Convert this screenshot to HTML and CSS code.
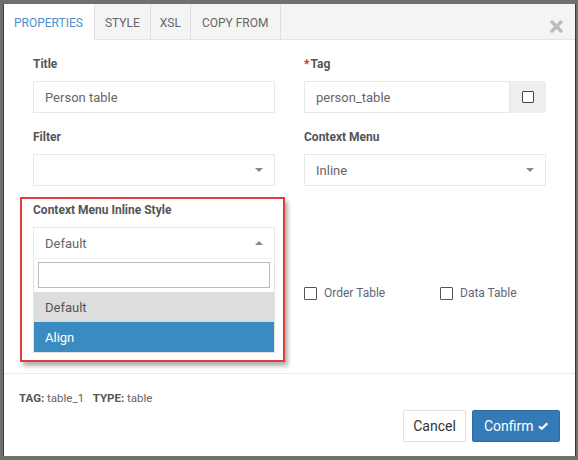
FILE: index.html
```html
<!DOCTYPE html>
<html>
<head>
<meta charset="utf-8">
<link rel="stylesheet" href="styles.css">
</head>
<body>
<div class="modal">
  <div class="modal-header">
    <div class="tabs">
      <div class="tab active">PROPERTIES</div>
      <div class="tab">STYLE</div>
      <div class="tab">XSL</div>
      <div class="tab">COPY FROM</div>
    </div>
    <button class="close" aria-label="Close">
      <svg width="13" height="13" viewBox="0 0 13 13"><path d="M2 2L11 11M11 2L2 11" stroke="#bcbcbc" stroke-width="3.4" stroke-linecap="round"/></svg>
    </button>
  </div>
  <div class="modal-body">
    <div class="row">
      <div class="group">
        <div class="label">Title</div>
        <div class="input">Person table</div>
      </div>
      <div class="group">
        <div class="label"><span class="req">*</span>Tag</div>
        <div class="input-group">
          <div class="input grow">person_table</div>
          <div class="addon"><span class="cb small"></span></div>
        </div>
      </div>
    </div>
    <div class="row">
      <div class="group">
        <div class="label">Filter</div>
        <div class="input select"><span></span><span class="caret down"></span></div>
      </div>
      <div class="group">
        <div class="label">Context Menu</div>
        <div class="input select"><span>Inline</span><span class="caret down"></span></div>
      </div>
    </div>
    <div class="row">
      <div class="group open">
        <div class="highlight"></div>
        <div class="label">Context Menu Inline Style</div>
        <div class="input select"><span>Default</span><span class="caret up"></span></div>
        <div class="dropdown">
          <div class="search"></div>
          <div class="option hover">Default</div>
          <div class="option selected">Align</div>
        </div>
      </div>
      <div class="group"></div>
    </div>
    <div class="row checks">
      <div></div>
      <div class="check-list">
        <label class="check first"><span class="cb"></span>Order Table</label>
        <label class="check"><span class="cb"></span>Data Table</label>
      </div>
    </div>
  </div>
  <div class="modal-footer">
    <div class="info"><b>TAG:</b> table_1&nbsp;&nbsp; <b>TYPE:</b> table</div>
    <div class="buttons">
      <button class="btn btn-default">Cancel</button>
      <button class="btn btn-primary">Confirm <svg width="15" height="12" viewBox="0 0 15 12"><path d="M1.5 6.5L5.5 10L13.5 2" fill="none" stroke="#fff" stroke-width="3.2" stroke-linejoin="round"/></svg></button>
    </div>
  </div>
</div>
</body>
</html>
```

FILE: styles.css
```css
* { box-sizing: border-box; }
html, body { margin: 0; padding: 0; }
body {
  width: 578px;
  height: 460px;
  background: #6f6f6f;
  font-family: Roboto, "Liberation Sans", sans-serif;
  padding: 4px 2px 0 3px;
  overflow: hidden;
}
.modal {
  width: 573px;
  height: 452px;
  background: #fff;
  border-left: 1px solid #3a3a3a;
  border-right: 1px solid #3a3a3a;
  display: flex;
  flex-direction: column;
}
.modal-header {
  height: 36px;
  background: #f4f4f4;
  border-bottom: 1px solid #e4e4e4;
  display: flex;
  justify-content: space-between;
  align-items: stretch;
}
.tabs { display: flex; }
.tab {
  display: flex;
  align-items: center;
  padding: 2px 10px 0;
  font-size: 12px;
  color: #666;
  border-right: 1px solid #dedede;
}
.tab.active {
  background: #fff;
  color: #4f8fcb;
  height: 36px;
  padding: 2px 11px 0 10px;
}
.tab:nth-child(3) { padding: 2px 9px 0; }
.tab:nth-child(4) { padding: 2px 11px 0; }
.close {
  border: 0;
  background: transparent;
  padding: 0;
  margin: 16px 12px 0 0;
  width: 13px;
  height: 13px;
}
.modal-body {
  height: 334px;
  border-bottom: 1px solid #ececec;
  padding: 17px 29px 0;
}
.row {
  display: grid;
  grid-template-columns: 242px 242px;
  column-gap: 29px;
}
.group {
  margin-bottom: 17px;
  position: relative;
}
.label {
  font-size: 12px;
  font-weight: bold;
  color: #555;
  line-height: 14px;
  height: 14px;
  margin-bottom: 10px;
}
.req { color: #cc2a2a; margin-right: 1px; }
.input {
  height: 32px;
  border: 1px solid #e9e9e9;
  font-size: 13px;
  color: #666;
  padding: 0 11px;
  display: flex;
  align-items: center;
  background: #fff;
}
.input-group { display: flex; }
.grow { flex: 1; }
.addon {
  width: 36px;
  height: 32px;
  background: #eeeeee;
  border-radius: 0 3px 3px 0;
  display: flex;
  align-items: center;
  justify-content: center;
}
.select { justify-content: space-between; }
.caret {
  width: 0; height: 0;
  border-left: 4px solid transparent;
  border-right: 4px solid transparent;
}
.caret.down { border-top: 4px solid #888; }
.caret.up { border-bottom: 4px solid #888; }
.open .select { border-bottom-color: #f2f2f2; }
.dropdown {
  position: absolute;
  left: 0;
  top: 56px;
  width: 242px;
  background: #fff;
  border: 1px solid #e2e2e2;
  border-top: 0;
  padding-top: 3px;
  z-index: 2;
}
.search {
  height: 26px;
  margin: 0 4px 4px 4px;
  border: 1px solid #b9b9b9;
}
.option {
  height: 30px;
  padding: 0 11px;
  font-size: 13px;
  display: flex;
  align-items: center;
}
.option.hover { background: #dddddd; color: #555; }
.option.selected { background: #3a8bbf; color: #fff; }
.highlight {
  position: absolute;
  left: -13px;
  top: -6px;
  width: 265px;
  height: 165px;
  border: 2px solid #e23b3b;
  box-shadow: 3px 4px 4px rgba(0,0,0,0.3);
  z-index: 3;
  pointer-events: none;
}
.checks { margin-top: 10px; }
.check-list { display: flex; }
.check {
  display: flex;
  align-items: center;
  font-size: 12px;
  color: #5d6674;
  height: 14px;
}
.check.first { width: 136px; }
.cb {
  display: inline-block;
  width: 13px;
  height: 13px;
  border: 1.5px solid #555;
  border-radius: 1px;
  background: #fff;
  margin-right: 7px;
}
.cb.small {
  width: 12px;
  height: 12px;
  border: 1px solid #444;
  margin: 0;
}
.modal-footer {
  flex: 1;
  padding: 17px 15px 0;
}
.info {
  font-size: 11.5px;
  color: #666;
  line-height: 14px;
  height: 14px;
}
.info b { color: #555; }
.buttons {
  display: flex;
  justify-content: flex-end;
  gap: 6px;
  margin-top: 5px;
}
.btn {
  height: 32px;
  font-family: Roboto, "Liberation Sans", sans-serif;
  font-size: 14px;
  border-radius: 2px;
  padding: 0 11px;
  display: flex;
  align-items: center;
  gap: 4px;
}
.btn-default {
  background: #fff;
  border: 1px solid #e0e0e0;
  color: #333;
  width: 63px;
  justify-content: center;
}
.btn-primary {
  background: #337ab7;
  border: 1px solid #2e6da4;
  color: #fff;
  width: 88px;
  justify-content: center;
}
```
